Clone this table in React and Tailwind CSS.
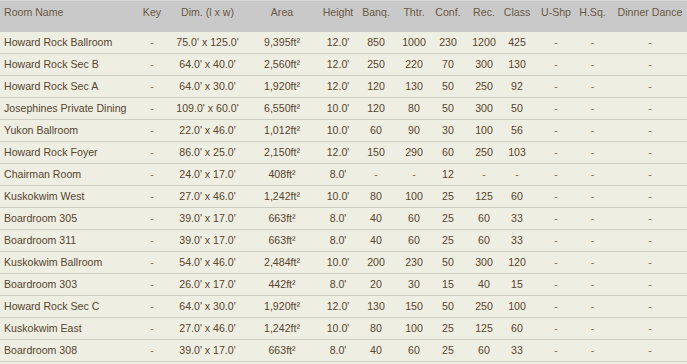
import React from 'react';

const columns = [
  { key: 'name', label: 'Room Name', cls: 'w-[126px] justify-start pl-[4px]' },
  { key: 'key', label: 'Key', cls: 'w-[54px] justify-center pr-[2px]' },
  { key: 'dim', label: 'Dim. (l x w)', cls: 'w-[65px] justify-center pr-[10px]' },
  { key: 'area', label: 'Area', cls: 'w-[65px] justify-center pl-[9px]' },
  { key: 'height', label: 'Height', cls: 'w-[47px] justify-center pl-[9px]' },
  { key: 'banq', label: 'Banq.', cls: 'w-[38px] justify-center' },
  { key: 'thtr', label: 'Thtr.', cls: 'w-[36px] justify-center pl-[2px]' },
  { key: 'conf', label: 'Conf.', cls: 'w-[35px] justify-center pr-[1px]' },
  { key: 'rec', label: 'Rec.', cls: 'w-[34px] justify-center pl-[2px]' },
  { key: 'cls', label: 'Class', cls: 'w-[36px] justify-center pr-[2px]' },
  { key: 'ushp', label: 'U-Shp', cls: 'w-[38px] justify-center pl-[2px]' },
  { key: 'hsq', label: 'H.Sq.', cls: 'w-[47px] justify-center pr-[10px]' },
  { key: 'dinner', label: 'Dinner Dance', cls: 'w-[66px] justify-center pr-[8px]' },
];

const rooms = [
  ['Howard Rock Ballroom', "75.0' x 125.0'", '9,395', "12.0'", '850', '1000', '230', '1200', '425'],
  ['Howard Rock Sec B', "64.0' x 40.0'", '2,560', "12.0'", '250', '220', '70', '300', '130'],
  ['Howard Rock Sec A', "64.0' x 30.0'", '1,920', "12.0'", '120', '130', '50', '250', '92'],
  ['Josephines Private Dining', "109.0' x 60.0'", '6,550', "10.0'", '120', '80', '50', '300', '50'],
  ['Yukon Ballroom', "22.0' x 46.0'", '1,012', "10.0'", '60', '90', '30', '100', '56'],
  ['Howard Rock Foyer', "86.0' x 25.0'", '2,150', "12.0'", '150', '290', '60', '250', '103'],
  ['Chairman Room', "24.0' x 17.0'", '408', "8.0'", '-', '-', '12', '-', '-'],
  ['Kuskokwim West', "27.0' x 46.0'", '1,242', "10.0'", '80', '100', '25', '125', '60'],
  ['Boardroom 305', "39.0' x 17.0'", '663', "8.0'", '40', '60', '25', '60', '33'],
  ['Boardroom 311', "39.0' x 17.0'", '663', "8.0'", '40', '60', '25', '60', '33'],
  ['Kuskokwim Ballroom', "54.0' x 46.0'", '2,484', "10.0'", '200', '230', '50', '300', '120'],
  ['Boardroom 303', "26.0' x 17.0'", '442', "8.0'", '20', '30', '15', '40', '15'],
  ['Howard Rock Sec C', "64.0' x 30.0'", '1,920', "12.0'", '130', '150', '50', '250', '100'],
  ['Kuskokwim East', "27.0' x 46.0'", '1,242', "10.0'", '80', '100', '25', '125', '60'],
  ['Boardroom 308', "39.0' x 17.0'", '663', "8.0'", '40', '60', '25', '60', '33'],
];

const App = () => {
  return (
    <div className="min-h-[364px] w-[687px] bg-[#efeee3] font-['Liberation_Sans',Arial,sans-serif] text-[10.6px] text-[#56452f]">
      <div className="flex h-[32px] border-t border-[#d8d8d8] bg-[#c9c9c9] text-[#6a5944]">
        {columns.map(col => (
          <div key={col.key} className={`flex shrink-0 whitespace-nowrap pt-[5px] leading-[13px] ${col.cls}`}>
            {col.label}
          </div>
        ))}
      </div>

      {rooms.map((room, i) => {
        const [name, dim, area, height, ...caps] = room;
        const values = [name, '-', dim, area, height, ...caps, '-', '-', '-'];
        return (
          <div key={i} className="flex h-[22px] items-center border-b border-[#cfcec4]">
            {columns.map((col, j) => (
              <div key={col.key} className={`flex shrink-0 whitespace-nowrap ${col.cls}`}>
                {j === 3 ? (
                  <span>{values[j]}ft²</span>
                ) : (
                  <span className={values[j] === '-' ? 'text-[#8a6a45]' : ''}>{values[j]}</span>
                )}
              </div>
            ))}
          </div>
        );
      })}
    </div>
  );
};

export default App;
